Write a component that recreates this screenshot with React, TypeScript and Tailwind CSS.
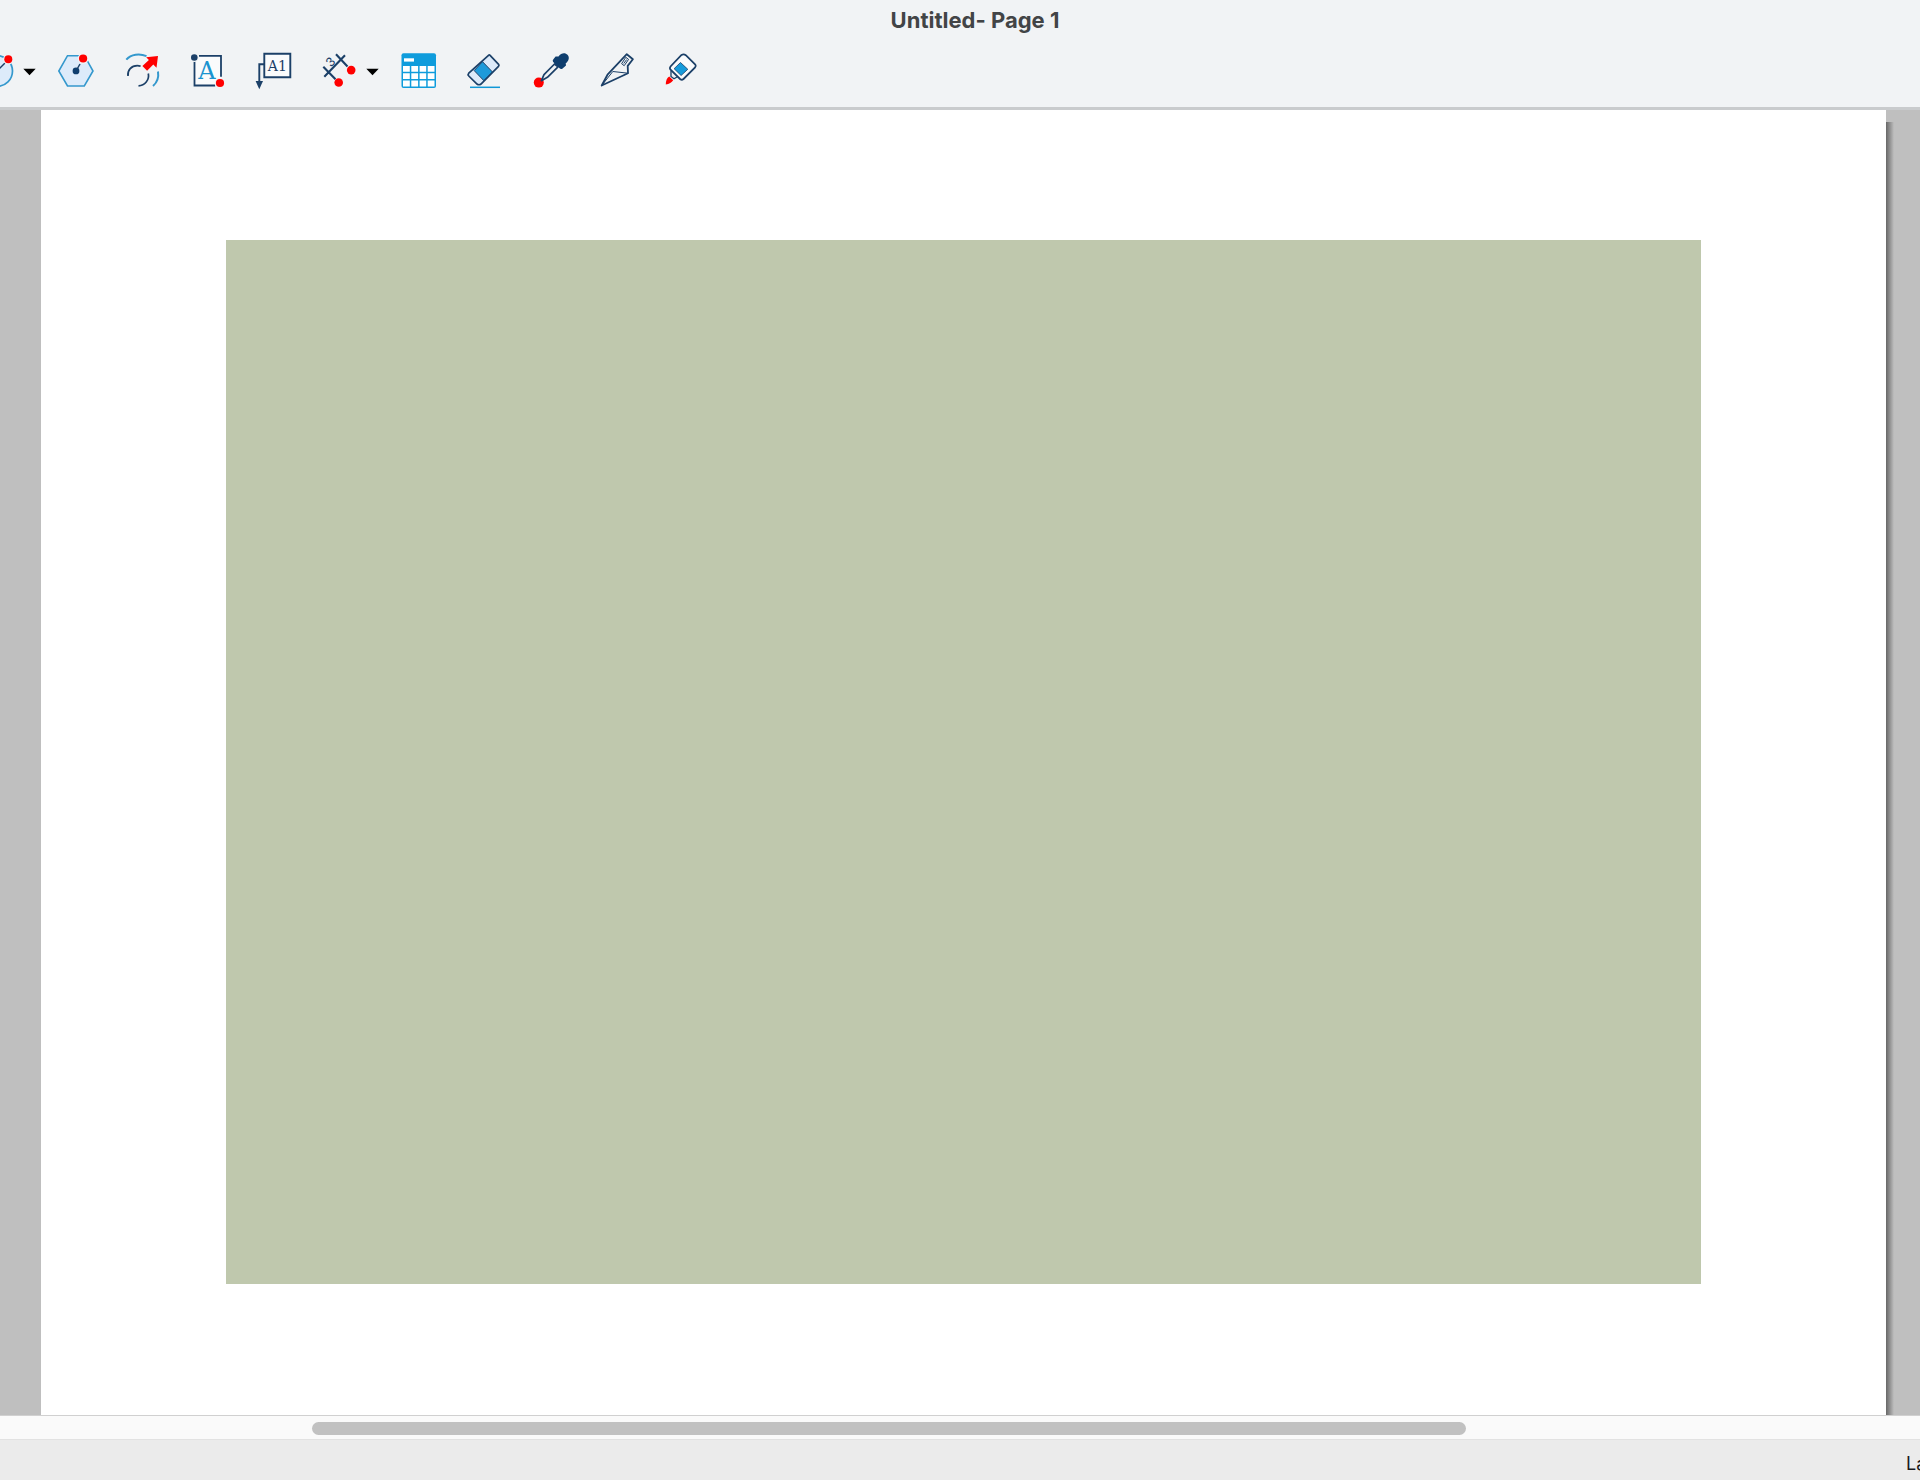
import type { ReactNode } from "react";

type ToolProps = {
  label: string;
  menu?: boolean;
  children: ReactNode;
};

const NAVY = "#1c4068";
const BLUE = "#0f97d7";
const RED = "#ff0000";

function Tool({ label, menu, children }: ToolProps) {
  const button = (
    <button type="button" aria-label={label} className="size-9 shrink-0">
      <svg viewBox="0 0 36 36" fill="none" className="size-9 overflow-visible">
        {children}
      </svg>
    </button>
  );

  if (!menu) return button;

  return (
    <div className="-mr-2 flex shrink-0 items-center gap-2">
      {button}
      <button type="button" aria-label={`${label} options`} className="w-[13px]">
        <svg viewBox="0 0 13 8" className="mt-1 h-2 w-[13px]">
          <path d="M0.3 0.8h12.4L6.5 7.2z" fill="#000" />
        </svg>
      </button>
    </div>
  );
}

function Toolbar() {
  return (
    <div role="toolbar" className="-ml-[21px] flex items-center gap-[30px]">
      <Tool label="Circle" menu>
        <circle cx="18" cy="19" r="15.5" fill="#ddebfa" stroke="#3498cd" strokeWidth="1.7" />
        <path d="M18 19l8-8" stroke={NAVY} strokeWidth="1.5" />
        <circle cx="29.3" cy="7.3" r="5.2" fill="#f1f3f5" />
        <circle cx="29.3" cy="7.3" r="4" fill={RED} />
      </Tool>
      <Tool label="Polygon">
        <path d="M9.5 3.7h17L35 19l-8.7 15H9.5L.8 19z" fill="#ddebfa" stroke="#3498cd" strokeWidth="1.6" />
        <path d="M18 19l4-7" stroke={NAVY} strokeWidth="1.5" />
        <circle cx="25.1" cy="6.5" r="5.4" fill="#f1f3f5" />
        <circle cx="25.1" cy="6.5" r="4.1" fill={RED} />
        <circle cx="18" cy="18.9" r="3.4" fill="#0f3e6e" />
      </Tool>
      <Tool label="Offset">
        <path d="M2.3 7.6C7 2.3 15.5 1 22.5 4.2M34 19.5c.8 5-1 11-5 14.6" stroke="#3498cd" strokeWidth="2" />
        <path d="M4 24c-.8-6 3.5-10.3 9.3-10.3 1.2 0 2.3.2 3.3.6M24.3 21.5c1.3 6.5-3.5 12.2-9.8 12.4" stroke={NAVY} strokeWidth="1.7" />
        <path d="M34 4l-1.5 11.8-3.2-3.3-6.2 6.3-4.7-4.7 6.5-6.1-2.7-2.8z" fill={RED} />
      </Tool>
      <Tool label="Text">
        <path d="M4.5 3.8H31v29.7H4.5z" fill="#fafbfc" />
        <path d="M9 3.8h22v21M4.5 8.5v25h20.7" stroke={NAVY} strokeWidth="1.8" />
        <circle cx="4.3" cy="5.5" r="4.5" fill="#f1f3f5" />
        <circle cx="4.3" cy="5.5" r="3.3" fill={NAVY} />
        <text x="17" y="26.7" textAnchor="middle" fontSize="24" fill="#1b94d0" className="font-['DejaVu_Serif',serif]">A</text>
        <circle cx="30" cy="31" r="5.3" fill="#f1f3f5" />
        <circle cx="30" cy="31" r="4.1" fill={RED} />
      </Tool>
      <Tool label="Callout">
        <path d="M8.3 12.2H3.3v18" stroke={NAVY} strokeWidth="1.9" />
        <path d="M8.3 1.8h26v23.4h-26z" fill="#fafbfc" stroke={NAVY} strokeWidth="1.9" />
        <path d="M-.4 29h7.4L3.3 37.2z" fill={NAVY} />
        <text x="21.3" y="19" textAnchor="middle" fontSize="14" fill={NAVY} className="font-['DejaVu_Serif',serif]">A1</text>
      </Tool>
      <Tool label="Dimension" menu>
        <path d="M1.3 14.7L13.5 27.3M14 2.3L25.5 14.5M2.3 24.7L23 3.3" stroke={NAVY} strokeWidth="2.1" />
        <text x="8.7" y="14.2" textAnchor="middle" fontSize="13" fill={NAVY} transform="rotate(-45 8.7 10)" className="font-['Liberation_Sans',sans-serif]">3</text>
        <circle cx="29.2" cy="18.1" r="4.3" fill={RED} />
        <circle cx="16.7" cy="30.5" r="4.3" fill={RED} />
      </Tool>
      <Tool label="Table">
        <rect x=".5" y="1.2" width="34.5" height="34.8" rx="2" fill="#0f9cdc" />
        <path d="M3 6.3h10v3.3H3z" fill="#fff" />
        {[14, 21.3, 28.6].map((y) => (
          <path key={y} d={`M2 ${y}h6.8v5.8H2zM10.3 ${y}h6.8v5.8h-6.8zM18.6 ${y}h6.6v5.8h-6.6zM26.7 ${y}h6.8v5.8h-6.8z`} fill="#fff" />
        ))}
      </Tool>
      <Tool label="Eraser">
        <path d="M21.5 3.3q.8-.7 1.6.1l8.5 9q.8 1-.1 1.9L14 32q-2 1.5-4 0L1.8 24q-1.3-1.5 0-3z" fill="#dceafa" />
        <path d="M15.5 9.7L25.5 20 17 28.8 7.2 18.6z" fill="#1d9ada" stroke={NAVY} />
        <path d="M21.5 3.3q.8-.7 1.6.1l8.5 9q.8 1-.1 1.9L14 32q-2 1.5-4 0L1.8 24q-1.3-1.5 0-3z" stroke={NAVY} strokeWidth="1.7" />
        <path d="M3 35.3h30" stroke={BLUE} strokeWidth="1.5" />
      </Tool>
      <Tool label="Eyedropper">
        <circle cx="5.8" cy="30.6" r="5" fill={RED} />
        <path d="M21.5 12L11 22.7l-2.6 6 6-3.4L25 14.8z" fill="#f1f3f5" stroke={NAVY} strokeWidth="1.7" strokeLinejoin="round" />
        <path d="M25.5 4.4c2.7-4 7-4 9-1.7 2.3 2.5 1.5 6.2-1.8 8.6l.3 2.2-4 3.5q-1.8.2-3-1.2l-6-6q-.8-1.6.6-2.7l2-2.5z" fill="#0f3e6e" />
      </Tool>
      <Tool label="Knife">
        <path d="M2.7 33.5L8.5 22.7 27.8 2.2l6.1 5-5.2 6.7.3 7.3z" stroke={NAVY} strokeWidth="1.8" strokeLinejoin="round" />
        <path d="M2.7 33.5L13.8 19.5l15.2 1.7" stroke={NAVY} strokeWidth="1" />
        <path d="M26.8 5.3l2.8 2.1-4.4 6.3-2.6-2zM27.7 7.5l-3 4" stroke={NAVY} strokeWidth="1" strokeLinejoin="round" />
      </Tool>
      <Tool label="Marker">
        <path d="M16.5 3q2.3-1.3 4.3.2l9.5 9.3q1 1.3-.2 2.8L18.5 27q-1.6 1.3-3.2.2L5.3 17.5q-1-1.5.2-3z" fill="#fafbfc" stroke={NAVY} strokeWidth="1.8" />
        <path d="M15.5 10.5l7.3 6.8-6.7 6.2-7-6.8z" fill="#169bdb" stroke={NAVY} strokeWidth=".8" />
        <path d="M6 19v5.5l3 2.3 3.4-2.1" stroke={NAVY} strokeWidth="1.3" />
        <path d="M4.2 24.5l4 3.8Q6 31.7.8 32.6q0-6 3.4-8.1z" fill={RED} />
      </Tool>
    </div>
  );
}

export default function App() {
  return (
    <div className="flex min-h-screen flex-col overflow-hidden bg-[#ebebeb] font-['Inter',sans-serif]">
      <header className="shrink-0 border-b-3 border-[#c9cbcd] bg-[#f1f3f5] pb-[19px]">
        <h1 className="pt-1.5 pb-[18px] pl-[30px] text-center text-[22px] leading-7 font-bold text-[#424446]">
          Untitled- Page 1
        </h1>
        <Toolbar />
      </header>

      <main className="flex flex-1 overflow-hidden bg-[#bfbfbf] pr-[34px] pl-[41px]">
        <div className="relative flex flex-1 bg-white px-[185px] pt-[130px] pb-[131px]">
          <div className="flex-1 bg-[#bfc8ad]" />
          <div className="absolute top-3 bottom-0 left-full w-2 bg-linear-to-r from-[#686868] to-[#bfbfbf]" />
        </div>
      </main>

      <div className="h-6 shrink-0 border-t border-[#d0d0d0] bg-[#fafafa] pt-1.5">
        <div className="ml-[312px] mr-[454px] h-[13px] rounded-full bg-[#c1c1c1]" />
      </div>

      <footer className="flex h-[41px] shrink-0 justify-end overflow-hidden border-t border-[#e2e2e2] pt-2.5 text-lg text-[#1a1a1a]">
        <p className="w-3.5 whitespace-nowrap">La</p>
      </footer>
    </div>
  );
}
